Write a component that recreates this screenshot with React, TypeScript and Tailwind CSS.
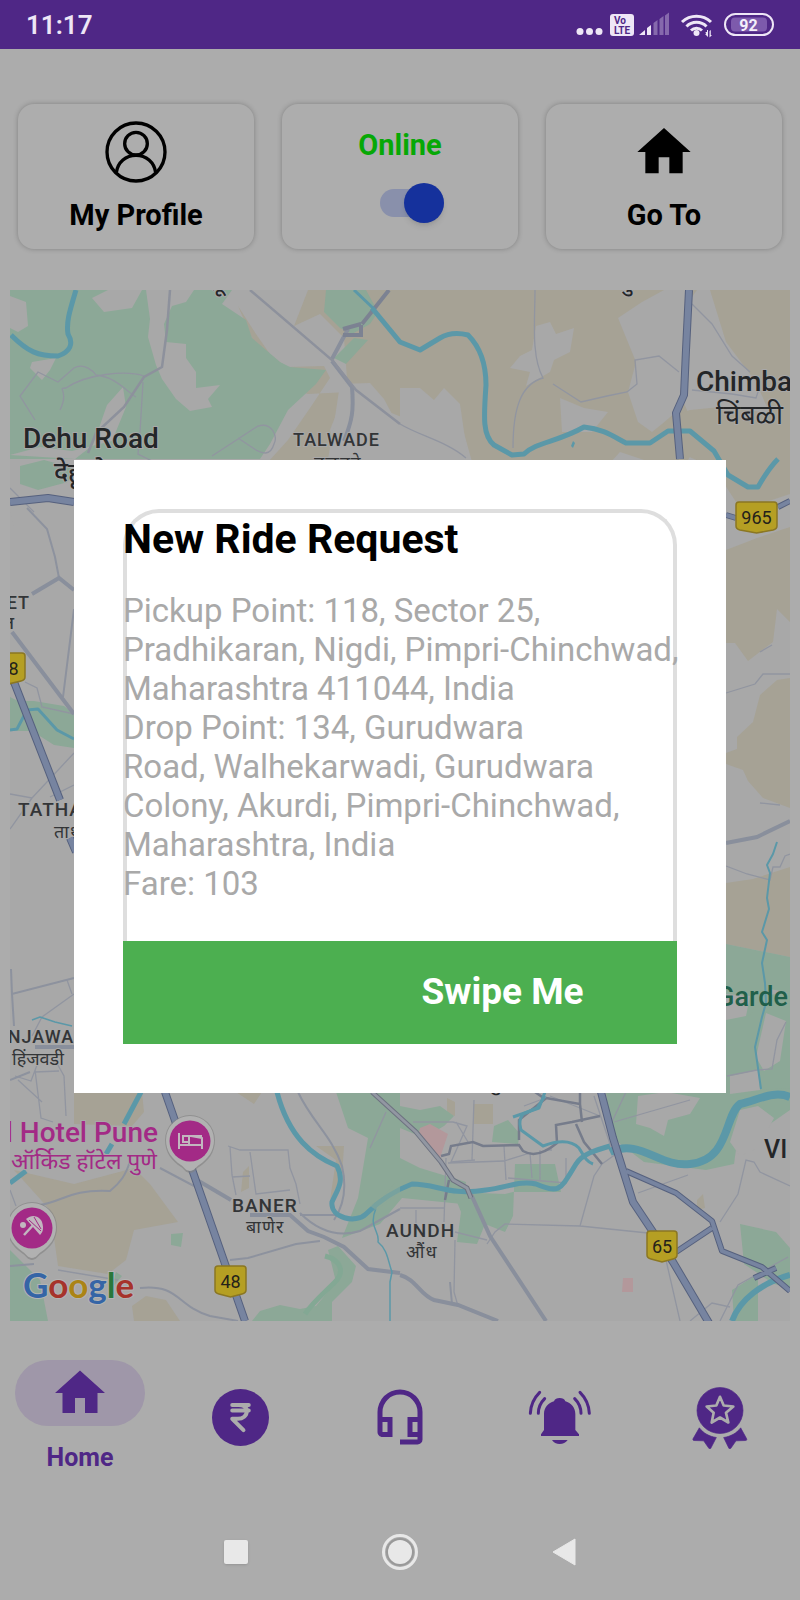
import { useState } from "react";

const NAV_LABELS = ["Earnings", "Support", "Notifications", "Rewards"];

const RIDE = {
  pickup: "118, Sector 25, Pradhikaran, Nigdi, Pimpri-Chinchwad, Maharashtra 411044, India",
  drop: ["134, Gurudwara", "Road, Walhekarwadi, Gurudwara Colony, Akurdi, Pimpri-Chinchwad, Maharashtra, India"],
  fare: 103,
};

function HouseIcon({ className }: { className: string }) {
  return (
    <svg viewBox="0 0 24 24" fill="currentColor" className={className} aria-hidden="true">
      <path d="M10 20v-6h4v6h5v-8h3L12 3 2 12h3v8z" />
    </svg>
  );
}

function ProfileIcon() {
  return (
    <svg viewBox="0 0 186 186" fill="none" stroke="currentColor" strokeWidth="10" className="h-[62px] w-[62px]" aria-hidden="true">
      <circle cx="93" cy="93" r="87" />
      <circle cx="93" cy="68" r="34" />
      <path d="M34 155c4-32 29-52 59-52s55 20 59 52" />
    </svg>
  );
}

function RupeeIcon() {
  return (
    <svg viewBox="0 0 172 172" className="h-[57px] w-[57px]" aria-hidden="true">
      <circle cx="86" cy="86" r="86" fill="currentColor" />
      <path
        d="M61 48h50M61 65h50M80 48c18 0 25 8 25 19 0 14-12 23-27 23H61l34 34"
        fill="none"
        stroke="#acacac"
        strokeWidth="12"
        strokeLinecap="round"
        strokeLinejoin="round"
      />
    </svg>
  );
}

function HeadsetIcon() {
  return (
    <svg viewBox="0 0 24 24" fill="currentColor" fillRule="evenodd" className="h-[60px] w-[60px]" aria-hidden="true">
      <path d="M12 1a9 9 0 0 0-9 9v8c0 1.1.9 2 2 2h4v-8H5v-2a7 7 0 0 1 14 0v2h-4v8h4v1h-7v2h7a2 2 0 0 0 2-2V10a9 9 0 0 0-9-9zM7 14v4H5v-4zM19 14v4h-2v-4z" />
    </svg>
  );
}

function BellIcon() {
  return (
    <svg viewBox="0 0 192 186" className="h-[62px] w-16" aria-hidden="true">
      <g fill="currentColor">
        <path d="M39 150v-5l9-13V84c0-19 13-33 30-38 2-7 9-10 17-10s15 3 17 10c17 5 30 19 30 38v48l11 13v5z" />
        <path d="M72 162h47c-6 8-14 12-24 12s-18-4-23-12z" />
      </g>
      <g fill="none" stroke="currentColor" strokeWidth="9" strokeLinecap="round">
        <path d="M35 19C18 36 8 58 7 82M50 38C38 50 31 65 31 82" />
        <path d="M156 19c17 17 27 39 28 63M140 38c12 12 19 27 19 44" />
      </g>
    </svg>
  );
}

function AwardIcon() {
  return (
    <svg viewBox="0 0 180 200" className="h-[67px] w-[60px]" aria-hidden="true">
      <g fill="currentColor" stroke="currentColor" strokeWidth="2" strokeLinejoin="round">
        <circle cx="90" cy="79" r="69" />
        <path d="M28 131 9 164c-1 3 0 5 3 5l29 1 16 23h5l17-33c-21-3-39-13-51-29z" />
        <path d="m152 131 18 33c1 3 0 5-3 5l-29 1-16 23h-5l-16-33c21-3 39-13 51-29z" />
      </g>
      <path
        d="m90 38 11 26 29 3-22 19 7 29-25-15-25 15 6-29-21-19 29-3z"
        fill="none"
        stroke="#acacac"
        strokeWidth="8"
        strokeLinejoin="round"
      />
    </svg>
  );
}

const NAV_ICONS = [RupeeIcon, HeadsetIcon, BellIcon, AwardIcon];

function StatusBar() {
  return (
    <header className="flex h-[49px] items-center justify-between bg-[#4f2786] px-[26px] text-[#eee6f6]">
      <time className="text-[26px] font-semibold leading-8">11:17</time>
      <svg viewBox="574 9 200 32" className="h-8 w-[200px]" role="img" aria-label="VoLTE, signal, Wi-Fi, battery 92">
        <g fill="#eee6f6">
          <circle cx="580" cy="31.500" r="3.500" />
          <circle cx="589.500" cy="31.500" r="3.500" />
          <circle cx="599" cy="31.500" r="3.500" />
          <rect x="610" y="14" width="24" height="22" rx="3" />
          <path d="M639 35l6-5v5zM647 28l4-3v10h-4z" />
          <path opacity=".35" d="M653.500 23l4-3v15h-4zM659.500 19l4-3v19h-4zM665 15.500l4-3V35h-4z" />
          <circle cx="696.500" cy="33" r="3" />
          <path d="M705.500 32h1.500v-2l1 0v7l-3-3h1zM709.500 31l1.300-1v5h1.200l-2.500 2.500z" />
        </g>
        <g fill="none" stroke="#eee6f6" strokeWidth="3">
          <path d="M682 22a21 21 0 0 1 29 0M686.500 26.500a14 14 0 0 1 20 0M691 30.500a8 8 0 0 1 11 0" />
        </g>
        <rect x="725" y="14" width="48" height="21" rx="10.500" fill="none" stroke="#eee6f6" strokeWidth="2" />
        <rect x="731" y="17.500" width="36" height="14" rx="4" fill="#7d5aac" />
        <g fontFamily="Roboto" fontWeight="700" textAnchor="middle">
          <text x="620" y="24" fontSize="10" fill="#4f2786">Vo</text>
          <text x="622" y="34" fontSize="10" fill="#4f2786">LTE</text>
          <text x="748.500" y="30.500" fontSize="16" fill="#f4effa">92</text>
        </g>
      </svg>
    </header>
  );
}

function Shield({ x, y, w, label }: { x: number; y: number; w: number; label: string }) {
  return (
    <g transform={`translate(${x} ${y})`}>
      <path
        d={`M3 0H${w - 3}Q${w} 0 ${w} 3V24Q${w} 27 ${w - 4} 28L${w / 2} 31L4 28Q0 27 0 24V3Q0 0 3 0Z`}
        fill="#b59f23"
        stroke="#8b7723"
        strokeWidth="1.500"
      />
      <text x={w / 2} y="22" fontSize="18" textAnchor="middle" fill="#24221a">{label}</text>
    </g>
  );
}

function Pin({ x, y, children }: { x: number; y: number; children: React.ReactNode }) {
  return (
    <g transform={`translate(${x} ${y})`}>
      <path d="M0 32C-4 32-6 28-9 26-18 20-25 12-25-1a25 25 0 0 1 50 0c0 13-7 21-16 27-3 2-5 6-9 6z" fill="#808080" opacity=".6" />
      <path d="M0 30C-4 30-6 26-9 24-18 18-24 10-24-1a24 24 0 0 1 48 0c0 11-6 19-15 25-3 2-5 6-9 6z" fill="#b1b1b1" />
      <circle r="20.500" fill="#a32a86" />
      {children}
    </g>
  );
}

function CityMap() {
  return (
    <svg
      viewBox="10 290 780 1031"
      preserveAspectRatio="xMidYMid slice"
      className="h-[1031px] w-full"
      fontFamily="Roboto, 'Noto Sans', sans-serif"
      role="img"
      aria-label="Map of Pune"
    >
      <rect x="10" y="290" width="780" height="1031" fill="#a8a8a8" />

      {/* farmland */}
      <g fill="#a6a295">
        <path d="M238 306l18 28 14 20 16 13 38-1 6 12-20 30-22 32-20 22h70l-8-32 14-36 60 24 6 18 28-26 24 16 14 50h122l22-24 30 10 38-2 12-20-20-46 3-84 14-20H308l-14 36 26-12 24 24 4 54-40 2-30-10-20-32z" />
        <path d="M710 290h80v204l-24 8-10 24-14 4-6-28-22-34-40-18-12-30 28-10 40-4 40 8-14-32-30-40z" />
        <path d="M726 550l31-12 33-11v95l-13-13-4 33-25 19-13-18h-9z" />
        <path d="M790 678v130l-27-10-15-17-5-11-17-6v-11l11-4v-12l16-15 7-27 17-15z" />
        <path d="M726 883l27-4 37-12v90l-64-13z" />
        <path d="M74 1092h68l2 20-12 14-58-2zM14 1170l60 14 60-16 16 16 28 38-44 8-8 30-18 14-50-8-8-56zM132 1306l14-10 20 4 14 21h-46z" />
        <path d="M236 1092h26l-8 12zM316 1146l20 14-6 40 12-24 2-30z" />
        <path d="M473 1104h20v20h-20zM447 1098l8 4v14l-8-2zM243 1172l6-6v22l-8 4z" />
        <path d="M697 1200l6-6 2 14-8 2z" />
      </g>
      <path d="M340 384l-6 40-6 35H400v-30l-16-30-14-16z" fill="#a8a8a8" />
      <path d="M400 388l20 0 14 12 10-12 16 16 8 55h-68z" fill="#a8a8a8" />
      <path d="M536 326l14-4 6 12 18-6-4 24-16 8-4 12-24 14 4-14-20-4 10-12 12-6zM618 318l24-16 22-12h24l-4 88-8 34-14 12-10 8-14-10-10-30 8-30zM560 398l24 10 24 4-16 20h-30z" fill="#a8a8a8" />

      {/* parks and forest */}
      <g fill="#8ca897">
        <path d="M10 290h222l-10 14 24 16 6 18 28 24 10 5 36 3-10 14-28 26-18 34-10 15H10z" />
        <path d="M326 290h40l12 22-8 12-18 10-12-6-16-16zM334 358l20-20 14 2-22 24z" />
        <path d="M10 697l8 4 16 0 30 5 10 8v34l-20-3-22-14H10z" />
        <path d="M726 944l64 13v36l-20-4-6 28-38 20z" />
        <path d="M726 1010l24 6 12-20 28-4v104l-30-4-34 2z" />
        <path d="M336 1092h64v66l20 10 46 14-4 22-60-6-22 26-38 14 16-40 10-60-20-10z" />
        <path d="M400 1106l20 4 20-4 14 10-10 10-20 12-24-10zM494 1126l14-6 12 14-2 10-26-2z" />
        <path d="M513 1192h48l-6-28h-40l-2 52-8 16-20-8-8 20-20-2 4-30-8-20 52 2z" />
        <path d="M606 1092h118l66-4v22l-20 14-30-4-6 44-28 6-62-8-34-26z" />
        <path d="M740 1224l36 8 14 16v40l-16-4-30-20zM732 1290l26-16v47h-24z" />
        <path d="M328 1250l10-4 18 20-4 16-20 20v19h-80l8-10 20-6 20 4 16-3 20-24z" />
        <path d="M171 1234l12-1-2 14-10-2zM10 1250l30 30 8 41H10zM110 1290l12-14-6-4z" />
      </g>
      <g fill="#a8a8a8">
        <path d="M10 296l16 6 2 24-10 6-8-4zM92 298l16-8h34l-10 18-28 4zM146 290h48l-8 12-14 4-8 18 2 18 20 2v14l10 14v16l24-3-12 14 4 8-22 4-14-12-14-20-6-14-8-28 2-18z" />
        <path d="M32 362l24-4-6 12-8 10-12-12zM10 455l30-8 32 4 40-10 14-34-3-20-16 18-14 40-18 14zM30 478l40-10 4 20-60 40-4-18z" />
        <path d="M638 1096l28-4 34 6-10 16-22 6-4 16-14-8-14-4zM740 1110l18-4 16 12-16 30-18 8-10-14z" />
        <path d="M726 994l24 2-4 20-20 4zM766 1013l20 8-6 40-16 10-8-14zM730 1076l28-6 2 20-30 4z" />
      </g>
      <path d="M20 466l24-6 30 8-6 14-30 8-18-6z" fill="#8ca897" />
      <path d="M420 1128l10-4 18 10-8 24-10-6-12-16zM623 1278h10v14h-11z" fill="#b3989b" />
      <path d="M325 1256c16 4 20 16 10 26-12 12-22 20-30 32" fill="none" stroke="#83a894" strokeWidth="5" />

      {/* local streets */}
      <g fill="none" stroke="#9195a0" strokeWidth="1.300">
        <path d="M35 420l-15-24 18-24 20 10 16-14c10-6 20 4 22 7 20 2 30 16 40 22M60 410c10-20-4-22 6-22 20-14 60-18 78-12M143 382l-3 50-2 22 16 8M212 456l46-30c14-4 20 10 16 18-4 14-14 8-18 6l-18-12" />
        <path d="M535 290c0 30-4 66 8 88-22 6-30 30-30 70M553 384l28 18 26-6 20-4 10-8-2-24 24-4 20 16M692 304l20 20 20 32 18 16M692 390l40 4 24 4 4-12M400 424c20 12 48 18 66 34" />
        <path d="M10 488l24 24M25 682l12 6 5 19 32 7M10 794l22 4 42-45M32 798l-22 31M50 797l24-12M67 980l5 14M74 994l-32 23-10 19M15 1076l16 5 6-16M18 1080l24 22M35 1070l6 48 12 4M54 1058l10 18 2 40M35 1072l24-1" />
        <path d="M726 693l29-9 8-10h27M760 652l12-7M726 866l21 8 23 6 3-13h7l5-11 5-2M760 803l20 2M727 1076l30-6 15-1 5-29 9-18" />
        <path d="M228 1146l12 4h48l2 18 6 16 4 20M230 1147l2 28 4 20M250 1152l6 42 34-4M232 1177l18-1M10 1190l6 16M58 1270l60 10" />
        <path d="M413 1122h40l14 4-16 36 24-2M456 1122l12 20M474 1100l-2 60M400 1208h44M416 1210v14M446 1158l-2 64M455 1240l-1 52 4 14M455 1232l32 8" />
        <path d="M504 1146l2 34M448 1163l56-2 26-8 2 25M540 1150v30M508 1178l58 5V1158M594 1096l20 60M610 1126l16-34M614 1122l76-22M638 1193l50-18M720 1222l18-28 8-34 8 2 6 10 30 14M666 1260l14 61M690 1321l22-18 18 4M720 1321l18-36 50-28" />
        <path d="M550 1096l50 20M540 1100l-16 6M552 1150l-7 0M580 1226l14-50 8-12 14-10M487 1244l8-12 10-8 75 2 68 7M386 1112l-16 36" />
      </g>
      <g fill="none" stroke="#8d929e" strokeWidth="2">
        <path d="M298 1092c14 30 34 44 44 74 6 26 0 42-8 54M336 1215h-36M300 1213c20 20 40 24 60 18l40-22M230 1260l18-2 48-14 24-3" />
        <path d="M40 1205c24-4 30-16 70-14 10-8 16-16 20-30M140 1288c40-4 36 18 70 28l28 5M10 1266l24-2" />
        <path d="M11 969l1 25 62-16M12 994l2 32M27 508l20 21 8 28 4 21M74 609l-11 88M10 1080l20-8M160 1168l34 18M450 1282l2 22" />
      </g>
      <g fill="none" stroke="#898f9c" strokeWidth="4">
        <path d="M197 1180l34 20M250 1215h40l18 16 16 6 20 10 24 22 32 4M32 594l27-16 15 12M12 632l62 82M35 1047h39M400 1275c16 4 20 20 34 25l24 5 40 16M470 1192l20 44 56 85" />
        <path d="M332 361l20 26M352 387c2 24 0 34-8 54M332 359l16-30" />
        <path d="M726 843l31-6 33-16" />
      </g>
      <g fill="none" stroke="#8d919c" strokeWidth="2.500">
        <path d="M250 290l82 70 24 30 44 34M170 290l-3 40-5 37-18 10-20 30-28 26-8 20" />
        <path d="M343 329l18-5M343 335h18v-10M389 290l-27 34" stroke="#7c8292" strokeWidth="4" />
      </g>
      <g fill="none" stroke="#767c8b" strokeWidth="2.500">
        <path d="M441 1156l8-2 2-8 22-4 10 4 36-1 4 6c10 6 22 2 34-8l-1-18 16-3 28-6M519 1140v-20l26-21-10-7M546 1098l34 6 2 18M576 1124l8 18 18 22M580 1092v12M449 1180l-4 20" />
      </g>

      {/* rivers */}
      <g fill="none" stroke="#5b98a8" strokeLinejoin="round">
        <path d="M76 290c-6 20-10 32-8 44 6 10 2 18-10 22-20 0-30-4-47-21" strokeWidth="5" />
        <path d="M354 290l20 19M545 1092l-6 16-26 9" strokeWidth="3" />
        <path d="M372 308l28 34 20 8 20-12c10-6 20-5 28-3 14 14 18 32 18 50-2 30-4 50 8 60l18 10 12-1c12-12 34-12 60-27 20 2 30 10 42 16l24 0 18-12 22 0 24 20 14 24 20 12h10c8-14 12-20 20-28" strokeWidth="5" />
        <path d="M10 730l7-1 10-19 11-1 19 21 17 9" strokeWidth="3" />
        <path d="M141 1092l-17 32M112 1144l-6 10M10 1183l16-12M277 1092c12 46 36 64 60 74 8 16 0 24-5 36-2 16 24 22 34 12 16-16 30-24 46-30 26 0 36 12 74 6 20-2 34-10 50-6 24 10 24 6 40-20 6-10 20-14 34-18" strokeWidth="5" />
        <path d="M545 1096l-8 12-14 6c-6 8-2 14-2 16l22 16c16-6 28-6 36 2 6 10 8 14 14 16" strokeWidth="3" />
        <path d="M610 1152c30-14 50 16 80 12 40-4 34-48 50-60 18-4 34-14 50-7" strokeWidth="8" />
        <path d="M732 1321c8-22 30-38 58-46" strokeWidth="6" />
        <path d="M777 842l-4 12-6 11 3 8-3 25 2 11-7 23 5 8-5 23 3 20 1 20-4 14-7 30 6 42" strokeWidth="2" />
        <path d="M32 1020l8-3 15 5 17 4M376 1208c-8 20 4 22 2 34 10 8 10 20 14 30l-2 10v39" strokeWidth="1.500" />
      </g>
      <path d="M376 1210l-6-4 14-10 12-14 4 2v8z" fill="#8ca897" opacity=".6" />
      <path d="M571 446l2-5 2 2-2 5z" fill="#5b98a8" />

      {/* highways */}
      <g fill="none" strokeLinejoin="round" stroke="#56617e" strokeWidth="8">
        <path d="M10 502l38-4 26 4M689 290l-3 60-2 45-8 18 4 46M14 682l46 118M70 838l6 14M165 1092l80 229M601 1092l12 46 20 64 40 60 36 61" />
        <path d="M626 1171l50 22 36 28 10 30 40 16 28 24M712 1228l-36 24M778 507l12-6M726 515l10 3M754 1278l22-10" strokeWidth="6" />
      </g>
      <g fill="none" strokeLinejoin="round" stroke="#7784a0" strokeWidth="6">
        <path d="M10 502l38-4 26 4M689 290l-3 60-2 45-8 18 4 46M14 682l46 118M70 838l6 14M165 1092l80 229M601 1092l12 46 20 64 40 60 36 61" />
        <path d="M626 1171l50 22 36 28 10 30 40 16 28 24M712 1228l-36 24M778 507l12-6M726 515l10 3M754 1278l22-10" strokeWidth="4" />
      </g>
      <path d="M372 1092l44 40 25 30 12 18 14 8 4 10" fill="none" stroke="#6d7280" strokeWidth="5" />
      <path d="M372 1092l44 40 25 30 12 18 14 8 4 10" fill="none" stroke="#9297a2" strokeWidth="3" />

      <Shield x={736} y={502} w={41} label="965" />
      <Shield x={-8} y={653} w={33} label="48" />
      <Shield x={215} y={1266} w={31} label="48" />
      <Shield x={647} y={1231} w={30} label="65" />

      {/* place names */}
      <g fill="#242628" stroke="#a8a8a8" strokeWidth="2" paintOrder="stroke" fontWeight="500">
        <text x="23" y="448" fontSize="28">Dehu Road</text>
        <text x="54" y="480" fontSize="26">देहू रोड</text>
        <text x="696" y="391" fontSize="28">Chimbali</text>
        <text x="716" y="424" fontSize="27" fontWeight="400">चिंबळी</text>
        <text x="764" y="1158" fontSize="25">VI</text>
        <text x="208" y="290" fontSize="22">लू</text>
        <text x="620" y="290" fontSize="22">कु</text>
        <text x="488" y="1090" fontSize="20">पुणे</text>
        <g fill="#333537" fontSize="18" letterSpacing="1">
          <text x="293" y="446">TALWADE</text>
          <text x="314" y="469" fontWeight="400">तळवडे</text>
          <text x="30" y="609" textAnchor="end">RAVET</text>
          <text x="15" y="629" textAnchor="end">रावेत</text>
          <text x="18" y="816" fontSize="19">TATHAWADE</text>
          <text x="54" y="838" fontWeight="400">ताथवडे</text>
          <text x="93" y="1043" textAnchor="end">HINJAWADI</text>
          <text x="12" y="1065" fontSize="18" fontWeight="400" letterSpacing="0">हिंजवडी</text>
          <text x="232" y="1212" fontSize="19">BANER</text>
          <text x="246" y="1233" fontWeight="400">बाणेर</text>
          <text x="386" y="1237" fontSize="19">AUNDH</text>
          <text x="406" y="1258" fontWeight="400">औंध</text>
        </g>
      </g>
      <text x="788" y="1006" fontSize="27" fontWeight="500" textAnchor="end" fill="#205f4a">Garde</text>
      <g fill="#a32a86" stroke="#a8a8a8" strokeWidth="2" paintOrder="stroke" fontWeight="500" textAnchor="end">
        <text x="158" y="1142" fontSize="28">l Hotel Pune</text>
        <text x="157" y="1169" fontSize="23" fontWeight="400">ऑर्किड हॉटेल पुणे</text>
      </g>

      <Pin x={190} y={1141}>
        <path d="M-11-8V8M-11 4H12M12 8V-3L1-5H-1V4M-7-5H-1V1H-7ZM-1-5H12" fill="none" stroke="#c2b6bf" strokeWidth="2" />
      </Pin>
      <Pin x={32} y={1228}>
        <circle cx="-9" cy="-3" r="3" fill="#c2b6bf" />
        <path d="M-8 7L4-6" stroke="#c2b6bf" strokeWidth="2.500" />
        <path d="M-6-9C1-15 8-11 10-6 12 0 11 4 8 7Z" fill="#c2b6bf" />
        <path d="M-3-8L9 3M2-11L9 1" stroke="#a32a86" strokeWidth="1" />
      </Pin>

      <text x="23" y="1298" fontSize="35" fontWeight="700" fontFamily="Lato" stroke="#b4b4b4" strokeWidth="2" paintOrder="stroke">
        <tspan fill="#3565a6">G</tspan>
        <tspan fill="#a6332b">o</tspan>
        <tspan fill="#ab8415">o</tspan>
        <tspan fill="#3565a6">g</tspan>
        <tspan fill="#29773a">l</tspan>
        <tspan fill="#a6332b">e</tspan>
      </text>
    </svg>
  );
}

function QuickActions() {
  const [online, setOnline] = useState(true);
  const card =
    "flex h-[145px] flex-1 flex-col items-center rounded-2xl bg-[#adadad] text-[29px] font-bold leading-8 text-black shadow-[0_0_5px_rgba(0,0,0,0.25)]";

  return (
    <section className="flex gap-7 px-[18px] pt-[55px]">
      <button className={card}>
        <span className="flex h-[95px] items-center">
          <ProfileIcon />
        </span>
        My Profile
      </button>
      <label className={card}>
        <span className="pt-[25px] text-[#06a806]">{online ? "Online" : "Offline"}</span>
        <input
          type="checkbox"
          role="switch"
          checked={online}
          onChange={(e) => setOnline(e.target.checked)}
          className="relative mt-[22px] ml-6 flex h-10 w-16 appearance-none items-center before:absolute before:inset-x-0 before:inset-y-[6px] before:rounded-full before:bg-[#8990ab] after:relative after:h-10 after:w-10 after:rounded-full after:bg-[#15319c] after:shadow-md checked:after:ml-auto"
        />
      </label>
      <button className={card}>
        <span className="flex h-[95px] items-center">
          <HouseIcon className="h-16 w-16" />
        </span>
        Go To
      </button>
    </section>
  );
}

function BottomNav() {
  return (
    <nav className="mt-[38px] grid h-[116px] grid-cols-5 items-center text-[#4f2786]">
      <a href="#home" className="flex flex-col items-center gap-4 text-[25px] font-bold leading-8">
        <span className="flex h-[66px] w-[130px] items-center justify-center rounded-full bg-[#9f97a9]">
          <HouseIcon className="h-[60px] w-[60px]" />
        </span>
        Home
      </a>
      {NAV_ICONS.map((Icon, i) => (
        <a key={NAV_LABELS[i]} href={`#${NAV_LABELS[i].toLowerCase()}`} aria-label={NAV_LABELS[i]} className="flex justify-center">
          <Icon />
        </a>
      ))}
    </nav>
  );
}

function SystemNav() {
  return (
    <div className="mt-auto flex h-24 items-center justify-center gap-[134px] text-[#e8e8e8]">
      <button aria-label="Recent apps" className="h-6 w-6 rounded-xs bg-current shadow-sm" />
      <button aria-label="Home screen" className="h-9 w-9 rounded-full border-3 border-current p-[3px]">
        <span className="block h-full w-full rounded-full bg-current shadow-[0_0_0_2px_#999]" />
      </button>
      <button aria-label="Back">
        <svg viewBox="0 0 24 28" className="h-7 w-6" fill="currentColor" aria-hidden="true">
          <path d="M23 1v26L1 14z" stroke="currentColor" strokeLinejoin="round" />
        </svg>
      </button>
    </div>
  );
}

function RideRequestDialog() {
  return (
    <div className="absolute inset-0 flex items-center justify-center px-[74px] pb-12">
      <section role="dialog" aria-labelledby="ride-title" className="w-full bg-white p-[49px]">
        <div className="rounded-t-[36px] border-4 border-b-0 border-[#dedede] pb-[38px]">
          <div className="-ml-1 -mr-2">
            <h2 id="ride-title" className="text-[41px] font-bold leading-[52px] text-black">
              New Ride Request
            </h2>
            <div className="pt-[26px] text-[33px] leading-[39px] text-[#a9a9a9]">
              <p>Pickup Point: {RIDE.pickup}</p>
              <p>
                Drop Point: {RIDE.drop[0]}
                <br />
                {RIDE.drop[1]}
              </p>
              <p>Fare: {RIDE.fare}</p>
            </div>
          </div>
        </div>
        <button className="h-[103px] w-full bg-[#4caf50] pl-[205px] text-[37px] font-bold text-white">Swipe Me</button>
      </section>
    </div>
  );
}

export default function App() {
  return (
    <div className="relative flex min-h-screen flex-col overflow-hidden bg-[#acacac] font-['Roboto','Noto_Sans',sans-serif]">
      <StatusBar />
      <main>
        <QuickActions />
        <div className="mt-[41px] px-[10px]">
          <CityMap />
        </div>
      </main>
      <BottomNav />
      <SystemNav />
      <RideRequestDialog />
    </div>
  );
}
